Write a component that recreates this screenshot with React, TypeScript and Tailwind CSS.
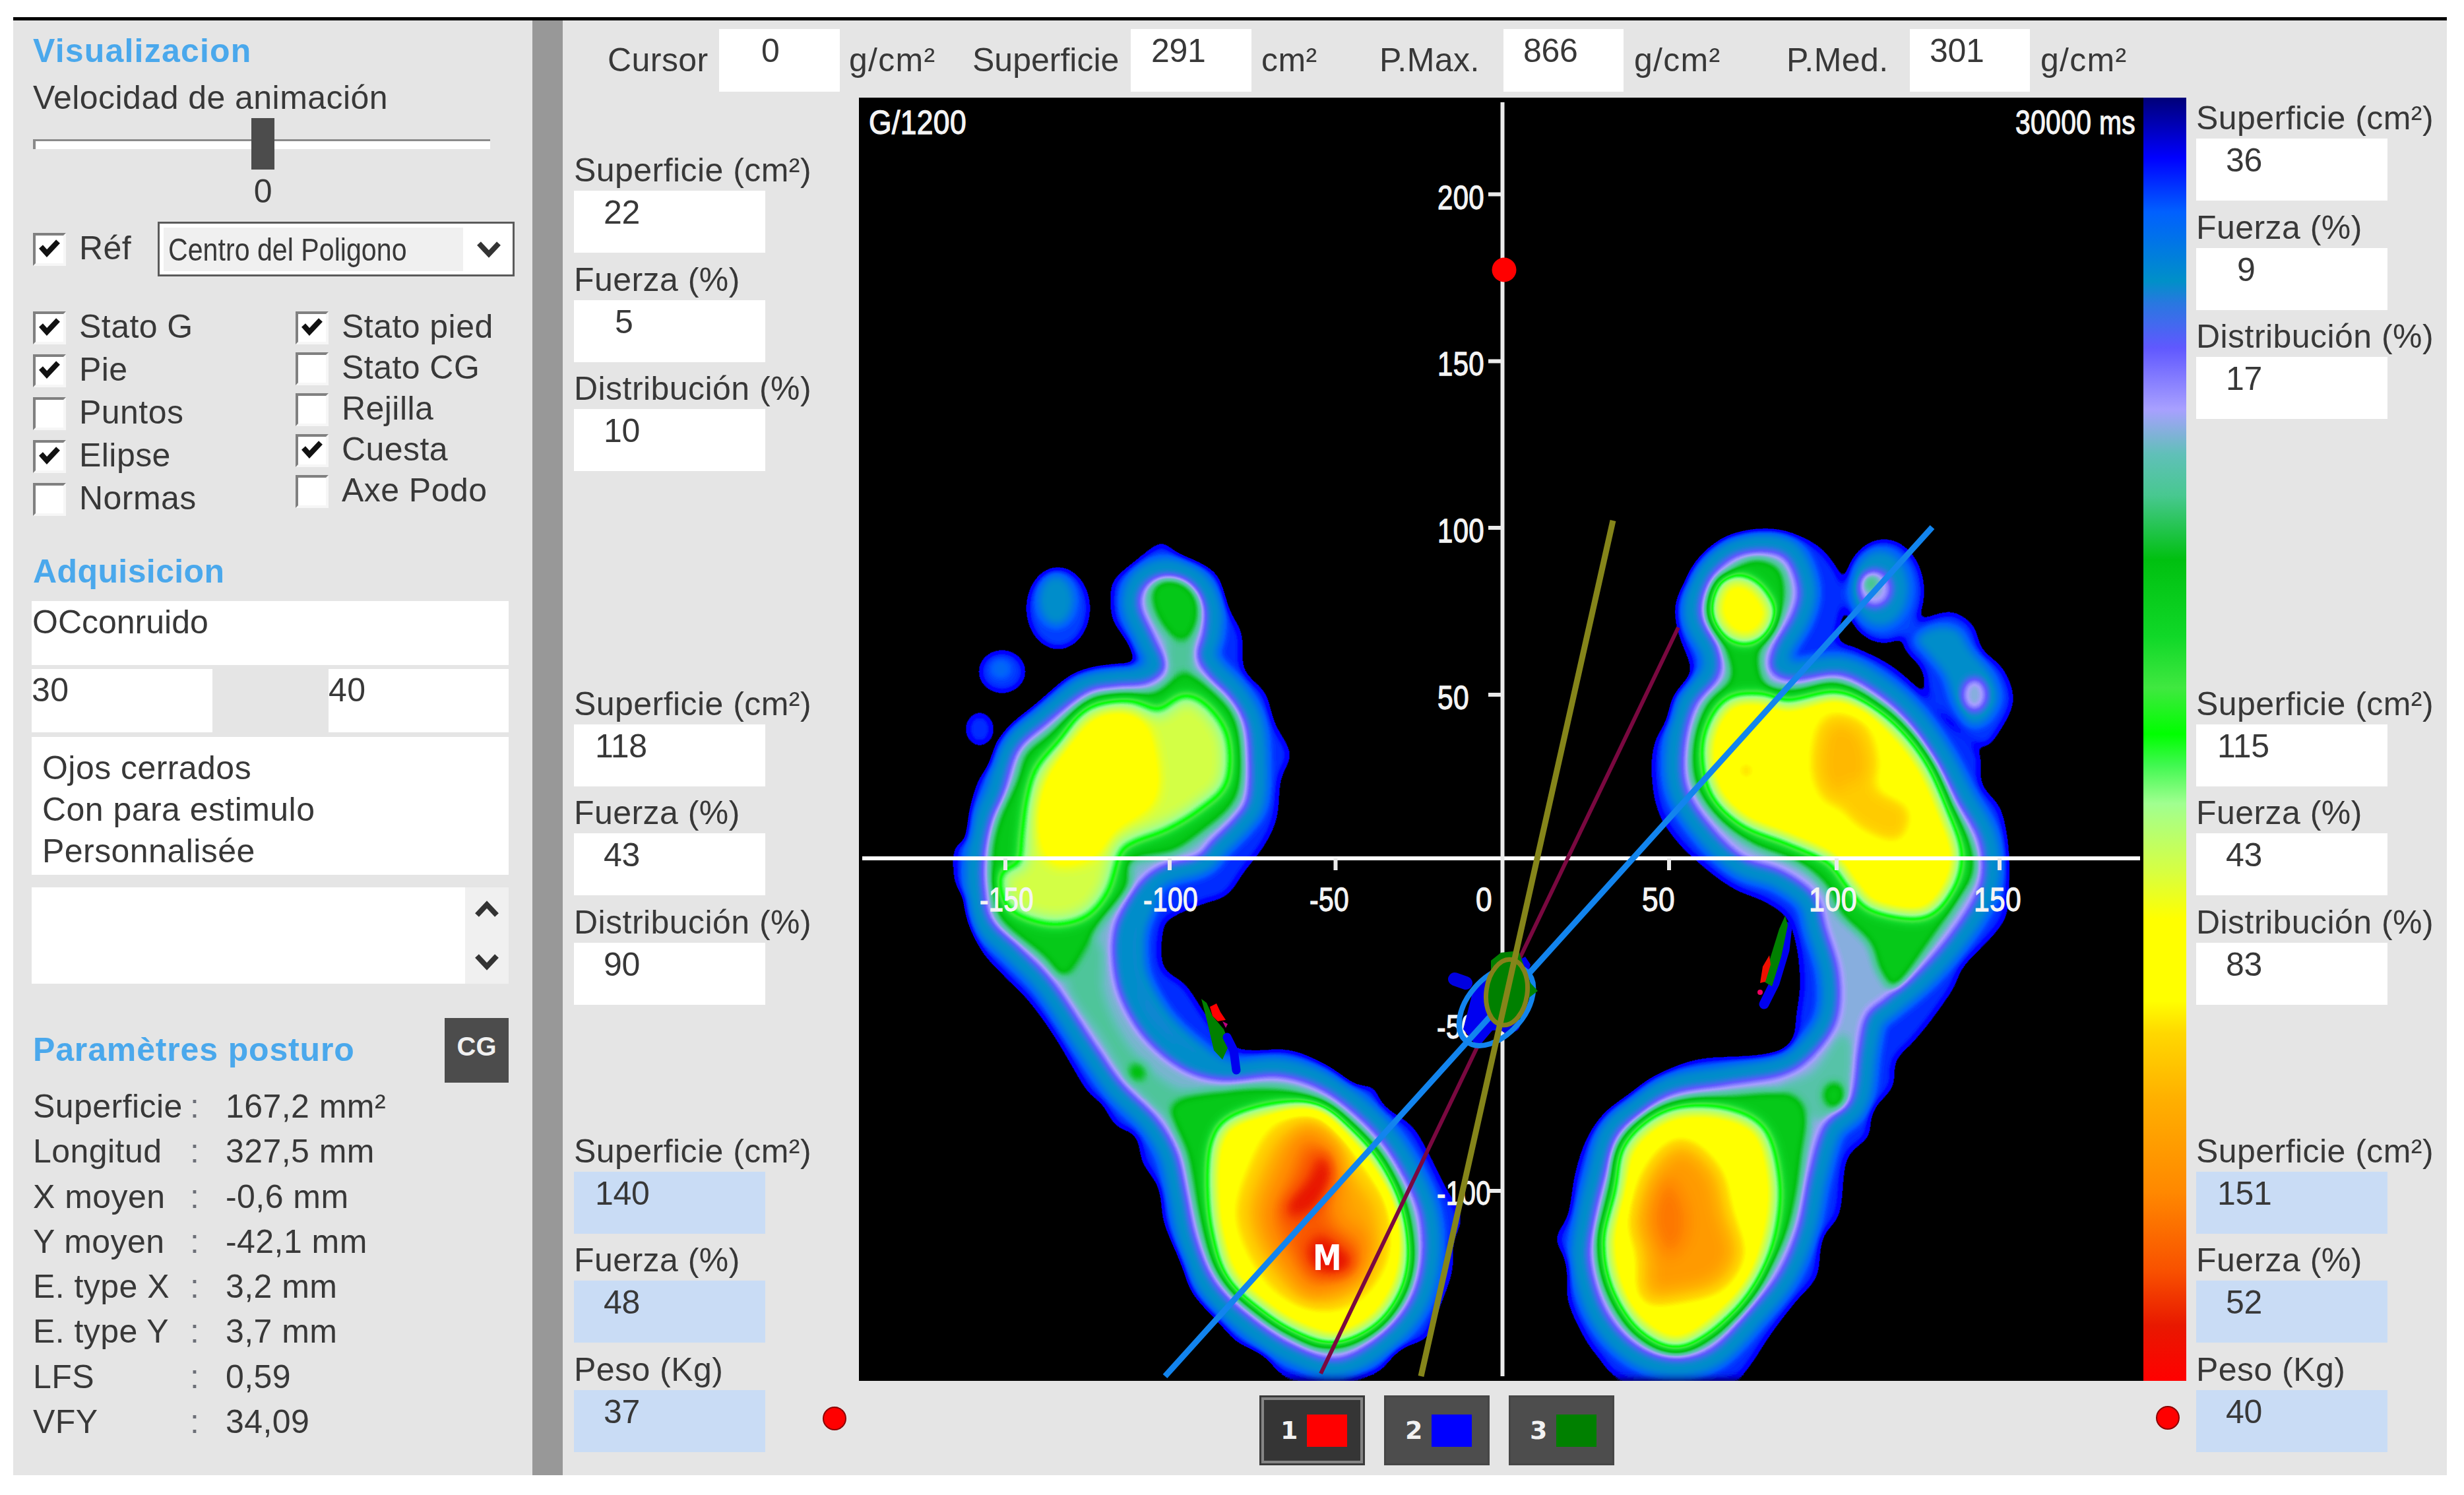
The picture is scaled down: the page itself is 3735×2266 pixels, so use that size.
import clsx from "clsx";

type Level = { v: number; pts: string; stroke?: number; sv?: number; rim?: number };

// Pressure scale, from no load to maximum
const SCALE: [number, string][] = [
  [0, "000078"],
  [0.047, "0000ff"],
  [0.089, "0060ff"],
  [0.143, "0090c8"],
  [0.16, "2878e0"],
  [0.195, "6058ff"],
  [0.243, "a8a0ff"],
  [0.278, "60c0b8"],
  [0.31, "48c890"],
  [0.36, "00c010"],
  [0.42, "10d828"],
  [0.46, "40e840"],
  [0.496, "00ff00"],
  [0.52, "40f850"],
  [0.55, "a0ff90"],
  [0.604, "d8ff40"],
  [0.64, "ffff00"],
  [0.704, "ffff00"],
  [0.729, "ffd800"],
  [0.78, "ffb000"],
  [0.853, "ff8800"],
  [0.915, "f85000"],
  [0.957, "e81800"],
  [1, "ff0000"],
];

const SCALE_CSS = `linear-gradient(to bottom, ${SCALE.map(([t, c]) => `#${c} ${t * 100}%`).join(", ")})`;

function sample(t: number, channel: number) {
  if (t < 0.032) return 0;
  if (t < 0.06) return channel === 2 ? 1 : 0;
  const i = Math.max(1, SCALE.findIndex(([s]) => s >= t));
  const [t0, c0] = SCALE[i - 1];
  const [t1, c1] = SCALE[i];
  const read = (c: string) => parseInt(c.slice(channel * 2, channel * 2 + 2), 16) / 255;
  return read(c0) + ((read(c1) - read(c0)) * (t - t0)) / (t1 - t0);
}

const table = (channel: number) =>
  Array.from({ length: 129 }, (_, i) => sample(i / 128, channel).toFixed(3)).join(" ");

const gray = (v: number) => `rgb(${Math.round(v * 255)} ${Math.round(v * 255)} ${Math.round(v * 255)})`;

// Closed Catmull-Rom curve through the points
function contour(src: string) {
  const p = src.split(" ").map((s) => s.split(",").map(Number));
  const n = p.length;
  let d = `M${p[0][0]} ${p[0][1]}`;
  for (let i = 0; i < n; i++) {
    const a = p[(i - 1 + n) % n];
    const b = p[i];
    const c = p[(i + 1) % n];
    const e = p[(i + 2) % n];
    d += `C${b[0] + (c[0] - a[0]) / 6} ${b[1] + (c[1] - a[1]) / 6} ${c[0] - (e[0] - b[0]) / 6} ${c[1] - (e[1] - b[1]) / 6} ${c[0]} ${c[1]}`;
  }
  return d + "Z";
}

const LEVELS: Level[] = [
  // outlines
  {
    v: 0.066,
    pts: "1764,823 1793,844 1842,869 1860,918 1882,959 1887,1015 1918,1050 1933,1096 1956,1142 1942,1183 1936,1239 1918,1280 1887,1321 1860,1357 1820,1372 1779,1390 1764,1408 1764,1464 1798,1493 1829,1539 1862,1580 1895,1592 1956,1592 2007,1614 2048,1643 2081,1648 2099,1677 2140,1706 2165,1746 2191,1798 2215,1844 2204,1884 2201,1930 2183,1981 2163,2027 2119,2047 2084,2082 2007,2090 1946,2085 1915,2053 1874,2033 1844,1999 1808,1958 1793,1913 1765,1855 1757,1803 1732,1763 1721,1723 1691,1706 1670,1674 1645,1650 1601,1576 1561,1520 1521,1479 1489,1443 1471,1397 1467,1367 1447,1336 1447,1285 1469,1270 1471,1229 1483,1183 1512,1147 1529,1107 1556,1091 1587,1058 1632,1022 1690,1017 1717,1010 1712,979 1688,943 1683,913 1688,879 1721,851 1744,831",
  },
  {
    v: 0.066,
    pts: "2679,804 2723,811 2761,831 2791,872 2797,913 2791,943 2788,971 2815,982 2869,1010 2921,1056 2951,1091 2999,1137 3005,1188 3032,1224 3043,1270 3046,1330 3043,1382 3026,1413 2978,1464 2961,1499 2929,1545 2902,1578 2875,1608 2869,1648 2840,1683 2832,1723 2800,1758 2789,1838 2763,1878 2754,1935 2720,1976 2685,2022 2651,2073 2628,2090 2540,2090 2456,2089 2421,2056 2398,2022 2376,1970 2376,1918 2359,1878 2378,1838 2387,1780 2404,1729 2433,1689 2473,1660 2513,1631 2576,1605 2674,1600 2714,1582 2723,1534 2728,1490 2723,1436 2708,1392 2674,1367 2625,1346 2571,1305 2533,1265 2511,1224 2503,1168 2509,1122 2530,1091 2539,1056 2563,1020 2544,959 2541,913 2566,872 2598,831 2636,811",
  },
  {
    v: 0.07,
    pts: "2961,928 2991,948 3005,984 3037,1015 3052,1061 3032,1107 3005,1132 2961,1096 2923,1056 2913,1015 2885,979 2896,948 2929,933",
  },
  // inner side of the left arch
  { v: 0.195, sv: 0.145, stroke: 44, pts: "1735,1350 1718,1400 1714,1440 1722,1490 1762,1556 1825,1612 1860,1630 1780,1620 1700,1540 1670,1450 1690,1370" },
  // lavender rim
  {
    v: 0.265,
    sv: 0.14,
    stroke: 58,
    pts: "1766,874 1802,885 1824,918 1824,959 1815,994 1833,1025 1864,1056 1887,1096 1893,1147 1891,1209 1873,1239 1837,1275 1815,1298 1766,1311 1735,1331 1708,1367 1690,1408 1688,1459 1701,1515 1737,1574 1793,1620 1854,1637 1936,1631 1997,1648 2048,1683 2094,1729 2130,1786 2153,1844 2155,1913 2135,1976 2089,2027 2028,2059 1966,2042 1905,2004 1844,1947 1813,1878 1798,1809 1783,1746 1752,1694 1701,1643 1660,1585 1596,1489 1547,1438 1503,1395 1492,1346 1492,1300 1503,1244 1521,1203 1543,1137 1587,1096 1646,1050 1690,1040 1739,1035 1766,1010 1748,964 1728,918 1737,887",
  },
  {
    v: 0.26,
    sv: 0.14,
    stroke: 58,
    pts: "2669,836 2707,846 2726,892 2717,933 2690,979 2685,1015 2717,1030 2788,1022 2842,1048 2891,1091 2934,1152 2967,1214 2999,1270 3005,1326 2988,1372 2945,1433 2902,1479 2858,1515 2830,1540 2818,1591 2806,1666 2766,1706 2743,1780 2726,1861 2697,1930 2651,1987 2594,2045 2536,2059 2479,2039 2433,1987 2410,1913 2416,1849 2433,1780 2450,1723 2485,1689 2536,1657 2617,1643 2703,1628 2749,1597 2783,1545 2786,1476 2766,1407 2750,1357 2701,1321 2642,1300 2593,1254 2557,1198 2552,1137 2568,1071 2604,1025 2604,984 2579,933 2590,882 2625,846",
  },
  // arches
  { v: 0.3, pts: "1645,1425 1668,1440 1672,1510 1712,1590 1780,1650 1850,1655 1790,1700 1715,1640 1670,1570 1620,1490" },
  { v: 0.29, pts: "2790,1570 2805,1590 2798,1660 2765,1695 2730,1680 2700,1650 2750,1625" },
  { v: 0.3, pts: "1775,960 1806,960 1802,1030 1775,1030" },
  // green
  {
    v: 0.385,
    pts: "1802,1020 1837,1045 1869,1081 1880,1127 1880,1188 1865,1224 1824,1260 1779,1290 1716,1305 1708,1346 1668,1397 1632,1459 1610,1479 1579,1448 1519,1397 1506,1351 1503,1290 1515,1239 1541,1183 1555,1142 1590,1112 1650,1062 1690,1052 1748,1049 1779,1028",
  },
  {
    v: 0.385,
    pts: "1777,1677 1854,1654 1936,1650 1997,1666 2043,1698 2090,1748 2125,1809 2139,1867 2140,1924 2115,1979 2066,2022 2007,2042 1958,2023 1894,1978 1843,1922 1818,1844 1800,1752",
  },
  { v: 0.38, pts: "1760,880 1790,880 1814,903 1816,940 1800,968 1775,964 1752,932 1745,900" },
  {
    v: 0.385,
    pts: "2669,848 2699,864 2706,907 2688,953 2667,994 2679,1038 2723,1044 2782,1034 2840,1062 2898,1119 2941,1190 2984,1272 2992,1321 2968,1365 2920,1436 2875,1494 2850,1472 2833,1428 2790,1385 2768,1343 2725,1307 2660,1281 2607,1241 2570,1186 2567,1127 2586,1068 2622,1027 2612,979 2590,928 2607,884 2638,855",
  },
  {
    v: 0.385,
    pts: "2548,1668 2617,1660 2708,1657 2738,1689 2732,1752 2722,1821 2703,1882 2659,1956 2602,2023 2536,2045 2481,2023 2443,1968 2425,1895 2437,1809 2460,1742 2498,1693",
  },
  // loaded areas
  {
    v: 0.6,
    sv: 0.45,
    stroke: 34,
    rim: 0.56,
    pts: "1668,1076 1712,1071 1757,1084 1797,1063 1829,1081 1853,1122 1851,1183 1815,1219 1766,1249 1712,1270 1690,1290 1672,1346 1641,1382 1592,1392 1538,1372 1525,1331 1552,1311 1558,1265 1565,1214 1579,1168 1614,1127 1641,1091",
  },
  {
    v: 0.67,
    sv: 0.45,
    stroke: 28,
    rim: 0.58,
    pts: "1869,1700 1936,1680 1997,1683 2043,1717 2084,1763 2114,1826 2127,1890 2119,1947 2084,1999 2028,2027 1977,2016 1926,1987 1869,1935 1846,1867 1839,1798 1844,1735",
  },
  { v: 0.66, sv: 0.45, stroke: 26, rim: 0.59, pts: "2635,880 2662,892 2682,925 2672,955 2645,968 2616,955 2602,925 2612,890" },
  {
    v: 0.68,
    sv: 0.45,
    stroke: 34,
    rim: 0.59,
    pts: "2625,1066 2669,1061 2712,1071 2777,1058 2820,1071 2869,1107 2913,1163 2945,1234 2964,1295 2951,1346 2913,1382 2842,1372 2810,1341 2777,1300 2712,1270 2647,1244 2604,1203 2590,1147 2598,1101",
  },
  {
    v: 0.67,
    sv: 0.45,
    stroke: 32,
    rim: 0.58,
    pts: "2548,1686 2617,1689 2668,1717 2688,1786 2685,1855 2663,1924 2617,1987 2548,2033 2490,2010 2450,1947 2439,1878 2456,1809 2467,1746 2502,1706",
  },
];

const PEAKS: Level[] = [
  { v: 0.69, pts: "1672,1084 1728,1092 1750,1152 1746,1215 1690,1255 1655,1298 1596,1306 1576,1249 1586,1188 1628,1122" },
  { v: 0.8, sv: 0.74, stroke: 30, pts: "1936,1717 1987,1700 2022,1729 2058,1775 2094,1832 2094,1901 2058,1958 2007,1976 1946,1953 1905,1901 1885,1838 1905,1769" },
  { v: 0.9, sv: 0.85, stroke: 24, pts: "1977,1722 2017,1746 2022,1803 2028,1849 2068,1884 2050,1935 1987,1953 1951,1907 1926,1844 1951,1775" },
  { v: 0.97, pts: "2005,1745 2024,1775 2005,1818 1966,1845 1945,1830 1982,1790" },
  { v: 0.97, pts: "2000,1872 2030,1890 2056,1912 2035,1934 1998,1928 1980,1900" },
  { v: 0.77, sv: 0.725, stroke: 20, pts: "2766,1091 2820,1096 2842,1147 2837,1188 2820,1215 2772,1214 2750,1163" },
  { v: 0.745, pts: "2800,1185 2860,1205 2896,1229 2880,1275 2830,1262 2795,1230" },
  { v: 0.82, sv: 0.75, stroke: 24, pts: "2548,1735 2599,1775 2617,1838 2634,1901 2605,1947 2548,1964 2496,1964 2490,1901 2479,1849 2502,1775" },
  { v: 0.87, pts: "2530,1785 2556,1830 2554,1880 2528,1905 2504,1860 2508,1815" },
];

type AxisLabel = { text: string; x: number; y: number; w: number };

const AXIS_LABELS: AxisLabel[] = [
  { text: "G/1200", x: 1317, y: 203, w: 148 },
  { text: "30000 ms", x: 3055, y: 203, w: 182 },
  { text: "200", x: 2179, y: 317, w: 71 },
  { text: "150", x: 2179, y: 569, w: 71 },
  { text: "100", x: 2179, y: 822, w: 71 },
  { text: "50", x: 2179, y: 1075, w: 48 },
  { text: "-50", x: 2178, y: 1574, w: 60 },
  { text: "-100", x: 2178, y: 1826, w: 82 },
  { text: "-150", x: 1485, y: 1381, w: 82 },
  { text: "-100", x: 1733, y: 1381, w: 83 },
  { text: "-50", x: 1985, y: 1381, w: 60 },
  { text: "0", x: 2237, y: 1381, w: 25 },
  { text: "50", x: 2489, y: 1381, w: 50 },
  { text: "100", x: 2742, y: 1381, w: 73 },
  { text: "150", x: 2992, y: 1381, w: 72 },
];

function Heatmap() {
  return (
    <g filter="url(#pressure)">
      <rect x="1302" y="148" width="1947" height="1945" fill="#000" />
      {LEVELS.slice(0, 3).map((l, i) => (
        <path key={i} d={contour(l.pts)} fill={gray(l.v)} />
      ))}
      {/* small toes */}
      <ellipse cx="1604" cy="922" rx="48" ry="62" fill={gray(0.075)} />
      <ellipse cx="1601" cy="910" rx="27" ry="38" fill={gray(0.14)} />
      <ellipse cx="1519" cy="1018" rx="36" ry="33" fill={gray(0.07)} />
      <ellipse cx="1517" cy="1014" rx="15" ry="14" fill={gray(0.1)} />
      <ellipse cx="1485" cy="1105" rx="22" ry="26" fill={gray(0.068)} />
      <ellipse cx="2856" cy="896" rx="60" ry="78" fill={gray(0.08)} />
      <ellipse cx="2850" cy="892" rx="44" ry="58" fill={gray(0.14)} />
      <ellipse cx="2842" cy="892" rx="24" ry="27" fill={gray(0.25)} />
      <ellipse cx="2836" cy="884" rx="10" ry="12" fill={gray(0.33)} />
      <path d={contour("2905,968 2935,950 2968,955 2988,985 3018,1020 3030,1058 3012,1092 2985,1098 2962,1066 2948,1025 2925,995")} fill={gray(0.142)} />
      <ellipse cx="2993" cy="1053" rx="18" ry="24" fill={gray(0.26)} />
      {LEVELS.slice(3).map((l, i) => (
        <g key={i}>
          {l.stroke ? <path d={contour(l.pts)} fill="none" stroke={gray(l.sv ?? 0)} strokeWidth={l.stroke} /> : null}
          <path d={contour(l.pts)} fill={gray(l.v)} />
          {l.rim ? <path d={contour(l.pts)} fill="none" stroke={gray(l.rim)} strokeWidth="16" /> : null}
        </g>
      ))}
      <circle cx="1724" cy="1625" r="14" fill={gray(0.37)} />
      <ellipse cx="2780" cy="1660" rx="17" ry="20" fill={gray(0.38)} />
      <circle cx="2647" cy="1168" r="14" fill={gray(0.72)} />
      <g filter="url(#soft)">
        {PEAKS.map((l, i) => (
          <path key={i} d={contour(l.pts)} fill={gray(l.v)} stroke={l.sv ? gray(l.sv) : "none"} strokeWidth={l.stroke} />
        ))}
      </g>
    </g>
  );
}

function PressurePlot() {
  return (
    <svg className="block h-[1945px] w-[1947px] bg-black" viewBox="1302 148 1947 1945">
      <defs>
        <filter id="pressure" filterUnits="userSpaceOnUse" x="1302" y="148" width="1947" height="1945" colorInterpolationFilters="sRGB">
          <feGaussianBlur stdDeviation="7" />
          <feComponentTransfer>
            <feFuncR type="table" tableValues={table(0)} />
            <feFuncG type="table" tableValues={table(1)} />
            <feFuncB type="table" tableValues={table(2)} />
          </feComponentTransfer>
        </filter>
        <filter id="soft" filterUnits="userSpaceOnUse" x="1302" y="148" width="1947" height="1945" colorInterpolationFilters="sRGB">
          <feGaussianBlur stdDeviation="10" />
        </filter>
      </defs>

      <Heatmap />

      {/* axes */}
      <g stroke="#ebebeb" strokeWidth="6">
        <path d="M1307 1301H3244" stroke="#fff" />
        <path d="M2277.500 155V2086" />
        <path d="M2256 294.500H2278M2256 547.500H2278M2256 800H2278M2256 1053H2278M2256 1805H2278" />
        <path d="M1524 1301V1319M1773 1301V1319M2024.500 1301V1319M2530 1301V1319M2784 1301V1319M3031 1301V1319" />
      </g>
      <g fill="#f4f4f4" stroke="#f4f4f4" strokeWidth="1.300" fontFamily="'Liberation Sans', Arial, sans-serif" fontSize="50">
        {AXIS_LABELS.map((l) => (
          <text key={`${l.x}-${l.y}`} x={l.x} y={l.y} textLength={l.w} lengthAdjust="spacingAndGlyphs">
            {l.text}
          </text>
        ))}
      </g>
      <circle cx="2280" cy="409" r="18.500" fill="#f00" />

      {/* centre of gravity trails under each foot */}
      <path d="M1821 1514L1829 1520 1838 1540 1855 1560 1864 1582 1853 1606 1840 1592 1829 1545Z" fill="#008000" />
      <path d="M1834 1526L1844 1521 1850 1534 1858 1546 1846 1548 1838 1540Z" fill="#f00" />
      <path d="M1853 1548L1861 1552 1858 1558Z" fill="#c00080" />
      <path d="M1860 1572L1870 1592 1874 1622" stroke="#0000f0" strokeWidth="13" strokeLinecap="round" fill="none" />
      <path d="M2709 1405L2705 1440 2690 1490 2674 1522" stroke="#0000f0" strokeWidth="15" strokeLinecap="round" fill="none" />
      <path d="M2706 1388L2710 1402 2700 1450 2686 1495 2674 1488 2684 1450 2697 1408Z" fill="#008000" />
      <path d="M2682 1448L2672 1465 2668 1490 2676 1488 2684 1462Z" fill="#f01000" />
      <circle cx="2668" cy="1504" r="4" fill="#f00060" />

      <path d="M2544 951L2002 2082" stroke="#7a0840" strokeWidth="6" />
      <path d="M2232 1505L2260 1478 2290 1462 2312 1450 2320 1462 2300 1530 2285 1560 2262 1562 2240 1588 2218 1560Z" fill="#0000f0" />
      <path d="M2205 1484L2222 1490M2284 1556L2294 1554" stroke="#0000e0" strokeWidth="20" strokeLinecap="round" />
      <path d="M2929 799L1766 2086" stroke="#1284ee" strokeWidth="9" />
      <ellipse cx="2268" cy="1525" rx="70" ry="43" transform="rotate(-49 2268 1525)" fill="none" stroke="#1284ee" strokeWidth="8" />
      <path d="M2260 1456L2275 1444 2302 1441 2312 1470 2320 1490 2331 1502 2318 1512 2304 1545 2280 1555 2262 1530 2260 1480Z" fill="#008000" />
      <ellipse cx="2284" cy="1504" rx="31" ry="50" transform="rotate(8 2284 1504)" fill="#008000" stroke="#85801a" strokeWidth="7" />
      <path d="M2445 789L2154 2086" stroke="#85851a" strokeWidth="9" />

      <text x="1990" y="1925" fill="#fff" fontFamily="'DejaVu Sans', sans-serif" fontWeight="700" fontSize="54" textLength="44" lengthAdjust="spacingAndGlyphs">
        M
      </text>
    </svg>
  );
}

function Chevron({ up }: { up?: boolean }) {
  return (
    <svg className={clsx("h-[26px] w-[36px]", up && "rotate-180")} viewBox="0 0 36 26" fill="none" stroke="#333" strokeWidth="8">
      <path d="M3 4L18 20L33 4" />
    </svg>
  );
}

function Check({ label, checked }: { label: string; checked?: boolean }) {
  return (
    <label className="flex h-[50px] items-center">
      <span className="mr-[20px] grid h-[50px] w-[50px] place-items-center border-4 border-b-[#f6f6f6] border-l-[#808080] border-r-[#f6f6f6] border-t-[#808080] bg-white">
        {checked ? (
          <svg className="h-[30px] w-[32px]" viewBox="0 0 32 30" fill="none" stroke="#111" strokeWidth="8">
            <path d="M3 11L12 21L29 3" />
          </svg>
        ) : null}
      </span>
      <span className="-mt-[4px]">{label}</span>
    </label>
  );
}

const PARAMS = [
  ["Superficie", "167,2 mm²"],
  ["Longitud", "327,5 mm"],
  ["X moyen", "-0,6 mm"],
  ["Y moyen", "-42,1 mm"],
  ["E. type X", "3,2 mm"],
  ["E. type Y", "3,7 mm"],
  ["LFS", "0,59"],
  ["VFY", "34,09"],
];

function Sidebar() {
  return (
    <aside className="w-[787px] shrink-0 pl-[30px]">
      <h2 className="mt-[19px] font-bold tracking-[1.2px] text-[#4aa8ec]">Visualizacion</h2>
      <p className="mt-[17px]">Velocidad de animación</p>
      <div className="relative mt-[4px] flex h-[78px] w-[693px] items-center">
        <div className="h-[15px] w-full border-l-4 border-t-[3px] border-[#8a8a8a] bg-white" />
        <div className="absolute left-[331px] top-0 h-[78px] w-[35px] bg-[#4c4c4c]" />
      </div>
      <p className="mt-[6px] w-[698px] text-center">0</p>

      <div className="mt-[19px] flex h-[83px] items-center">
        <div className="w-[189px]">
          <Check label="Réf" checked />
        </div>
        <div className="flex h-[83px] w-[541px] items-center border-[3px] border-[#5a5a5a] bg-white">
          <div className="m-[6px] flex h-[66px] w-[454px] items-center bg-[#f0f0f0] pl-[7px]">
            <span className="origin-left scale-x-[0.84] text-[49px] tracking-normal">Centro del Poligono</span>
          </div>
          <div className="ml-[15px] flex">
            <Chevron />
          </div>
        </div>
      </div>

      <div className="mt-[53px] flex h-[310px]">
        <div className="flex w-[398px] flex-col gap-[15px]">
          <Check label="Stato G" checked />
          <Check label="Pie" checked />
          <Check label="Puntos" />
          <Check label="Elipse" checked />
          <Check label="Normas" />
        </div>
        <div className="flex flex-col gap-3">
          <Check label="Stato pied" checked />
          <Check label="Stato CG" />
          <Check label="Rejilla" />
          <Check label="Cuesta" checked />
          <Check label="Axe Podo" />
        </div>
      </div>

      <h2 className="mt-[57px] font-bold tracking-[0.4px] text-[#4aa8ec]">Adquisicion</h2>
      <div className="-ml-[2px] w-[723px]">
        <div className="mt-[18px] h-[97px] bg-white pl-px pt-[5px] tracking-[0px]">OCconruido</div>
        <div className="mt-[6px] flex h-[96px] justify-between">
          <div className="w-[274px] bg-white pt-[5px]">30</div>
          <div className="w-[273px] bg-white pt-[5px]">40</div>
        </div>
        <div className="mt-[7px] h-[209px] bg-white pl-[16px] pt-[16px] leading-[63px]">
          <p>Ojos cerrados</p>
          <p>Con para estimulo</p>
          <p>Personnalisée</p>
        </div>
        <div className="mt-[19px] flex h-[146px] justify-end bg-white">
          <div className="flex w-[66px] flex-col items-center justify-between bg-[#f0f0f0] py-[20px]">
            <Chevron up />
            <Chevron />
          </div>
        </div>
      </div>

      <div className="mt-[52px] flex w-[721px] justify-between">
        <h2 className="mt-[21px] font-bold tracking-[0.85px] text-[#4aa8ec]">Paramètres posturo</h2>
        <button className="flex h-[98px] w-[97px] justify-center bg-[#4c4c4c] pt-[18px] text-[40px] font-bold leading-[50px] tracking-normal text-[#f0f0f0]">
          CG
        </button>
      </div>
      <dl className="mt-[2px] leading-[68.3px]">
        {PARAMS.map(([name, value]) => (
          <div key={name} className="flex">
            <dt className="flex w-[292px] justify-between">
              {name}
              <span className="w-[54px] text-[#6d7078]">:</span>
            </dt>
            <dd>{value}</dd>
          </div>
        ))}
      </dl>
    </aside>
  );
}

const VALUE_PAD = ["", "pl-[62px]", "pl-[45px]", "pl-[32px]"];

function Stat({ label, value, blue }: { label: string; value: string; blue?: boolean }) {
  return (
    <div>
      <p>{label}</p>
      <div className={clsx("mt-[4px] h-[94px] w-[290px] pt-[6px] tracking-[-0.3px]", VALUE_PAD[value.length], blue ? "bg-[#c9dcf5]" : "bg-white")}>
        {value}
      </div>
    </div>
  );
}

function StatGroup({ values, total, className }: { values: string[]; total?: boolean; className: string }) {
  const labels = ["Superficie (cm²)", "Fuerza (%)", total ? "Peso (Kg)" : "Distribución (%)"];
  return (
    <div className={clsx("flex flex-col gap-[13.5px]", className)}>
      {labels.map((label, i) => (
        <Stat key={label} label={label} value={values[i]} blue={total} />
      ))}
    </div>
  );
}

function TopBar() {
  return (
    <header className="flex h-[117px] pl-[68px]">
      <span className="mt-[33px] w-[169px]">Cursor</span>
      <div className="mt-[13px] h-[95px] w-[183px] bg-white pl-[64px] pt-[6px]">0</div>
      <span className="mt-[33px] w-[201px] pl-[14px] tracking-[1.3px]">g/cm²</span>
      <span className="mt-[33px] w-[240px] tracking-[0px]">Superficie</span>
      <div className="mt-[13px] h-[95px] w-[183px] bg-white pl-[31px] pt-[6px] tracking-[-0.3px]">291</div>
      <span className="mt-[33px] w-[194px] pl-[15px]">cm²</span>
      <span className="mt-[33px] w-[188px]">P.Max.</span>
      <div className="mt-[13px] h-[95px] w-[182px] bg-white pl-[30px] pt-[6px] tracking-[-0.3px]">866</div>
      <span className="mt-[33px] w-[247px] pl-[16px] tracking-[1.3px]">g/cm²</span>
      <span className="mt-[33px] w-[187px]">P.Med.</span>
      <div className="mt-[13px] h-[95px] w-[182px] bg-white pl-[30px] pt-[6px] tracking-[-0.3px]">301</div>
      <span className="mt-[33px] pl-[16px] tracking-[1.3px]">g/cm²</span>
    </header>
  );
}

const SERIES = [
  { id: "1", color: "bg-[#ff0000]", active: true },
  { id: "2", color: "bg-[#0000ff]" },
  { id: "3", color: "bg-[#008000]" },
];

export default function App() {
  return (
    <div className="h-[2266px] w-[3735px] overflow-hidden bg-white pl-5 pt-[26px] font-['Liberation_Sans',Arial,sans-serif] text-[50px] leading-[54px] tracking-[0.45px] text-[#383838]">
      <div className="flex h-[2210px] w-[3689px] whitespace-nowrap border-t-[5px] border-black bg-[#e5e5e5]">
        <Sidebar />
        <div className="w-[46px] shrink-0 bg-[#989898]" />
        <main className="flex flex-1 flex-col">
          <TopBar />
          <div className="flex flex-1">
            <section className="relative w-[449px] pl-[17px]">
              <StatGroup className="mt-[83px]" values={["22", "5", "10"]} />
              <StatGroup className="mt-[325.5px]" values={["118", "43", "90"]} />
              <StatGroup className="mt-[195px]" values={["140", "48", "37"]} total />
              <span className="absolute bottom-[68px] right-[19px] h-9 w-9 rounded-full border-2 border-[#8a0000] bg-[#ff0000]" />
            </section>

            <section className="w-[2012px]">
              <div className="flex">
                <PressurePlot />
                <div className="w-[65px]" style={{ backgroundImage: SCALE_CSS }} />
              </div>
              <div className="flex gap-[29px] pl-[607px] pt-[22px]">
                {SERIES.map((s) => (
                  <button
                    key={s.id}
                    className={clsx(
                      "flex h-[106px] w-[160px] items-center border-[3px] pl-[29px] font-['DejaVu_Sans',sans-serif] text-[38px] font-bold tracking-normal text-[#f2f2f2]",
                      s.active ? "border-[#3a3a3a] bg-[#353535] shadow-[inset_0_0_0_4px_#858585]" : "border-[#464646] bg-[#4d4d4d]",
                    )}
                  >
                    {s.id}
                    <span className={clsx("ml-[14px] h-[49px] w-[61px]", s.color)} />
                  </button>
                ))}
                <span className="ml-auto mr-[10px] mt-[16px] h-9 w-9 rounded-full border-2 border-[#8a0000] bg-[#ff0000]" />
              </div>
            </section>

            <section className="pl-[15px]">
              <StatGroup className="mt-[4px]" values={["36", "9", "17"]} />
              <StatGroup className="mt-[404.5px]" values={["115", "43", "83"]} />
              <StatGroup className="mt-[195px]" values={["151", "52", "40"]} total />
            </section>
          </div>
        </main>
      </div>
    </div>
  );
}
